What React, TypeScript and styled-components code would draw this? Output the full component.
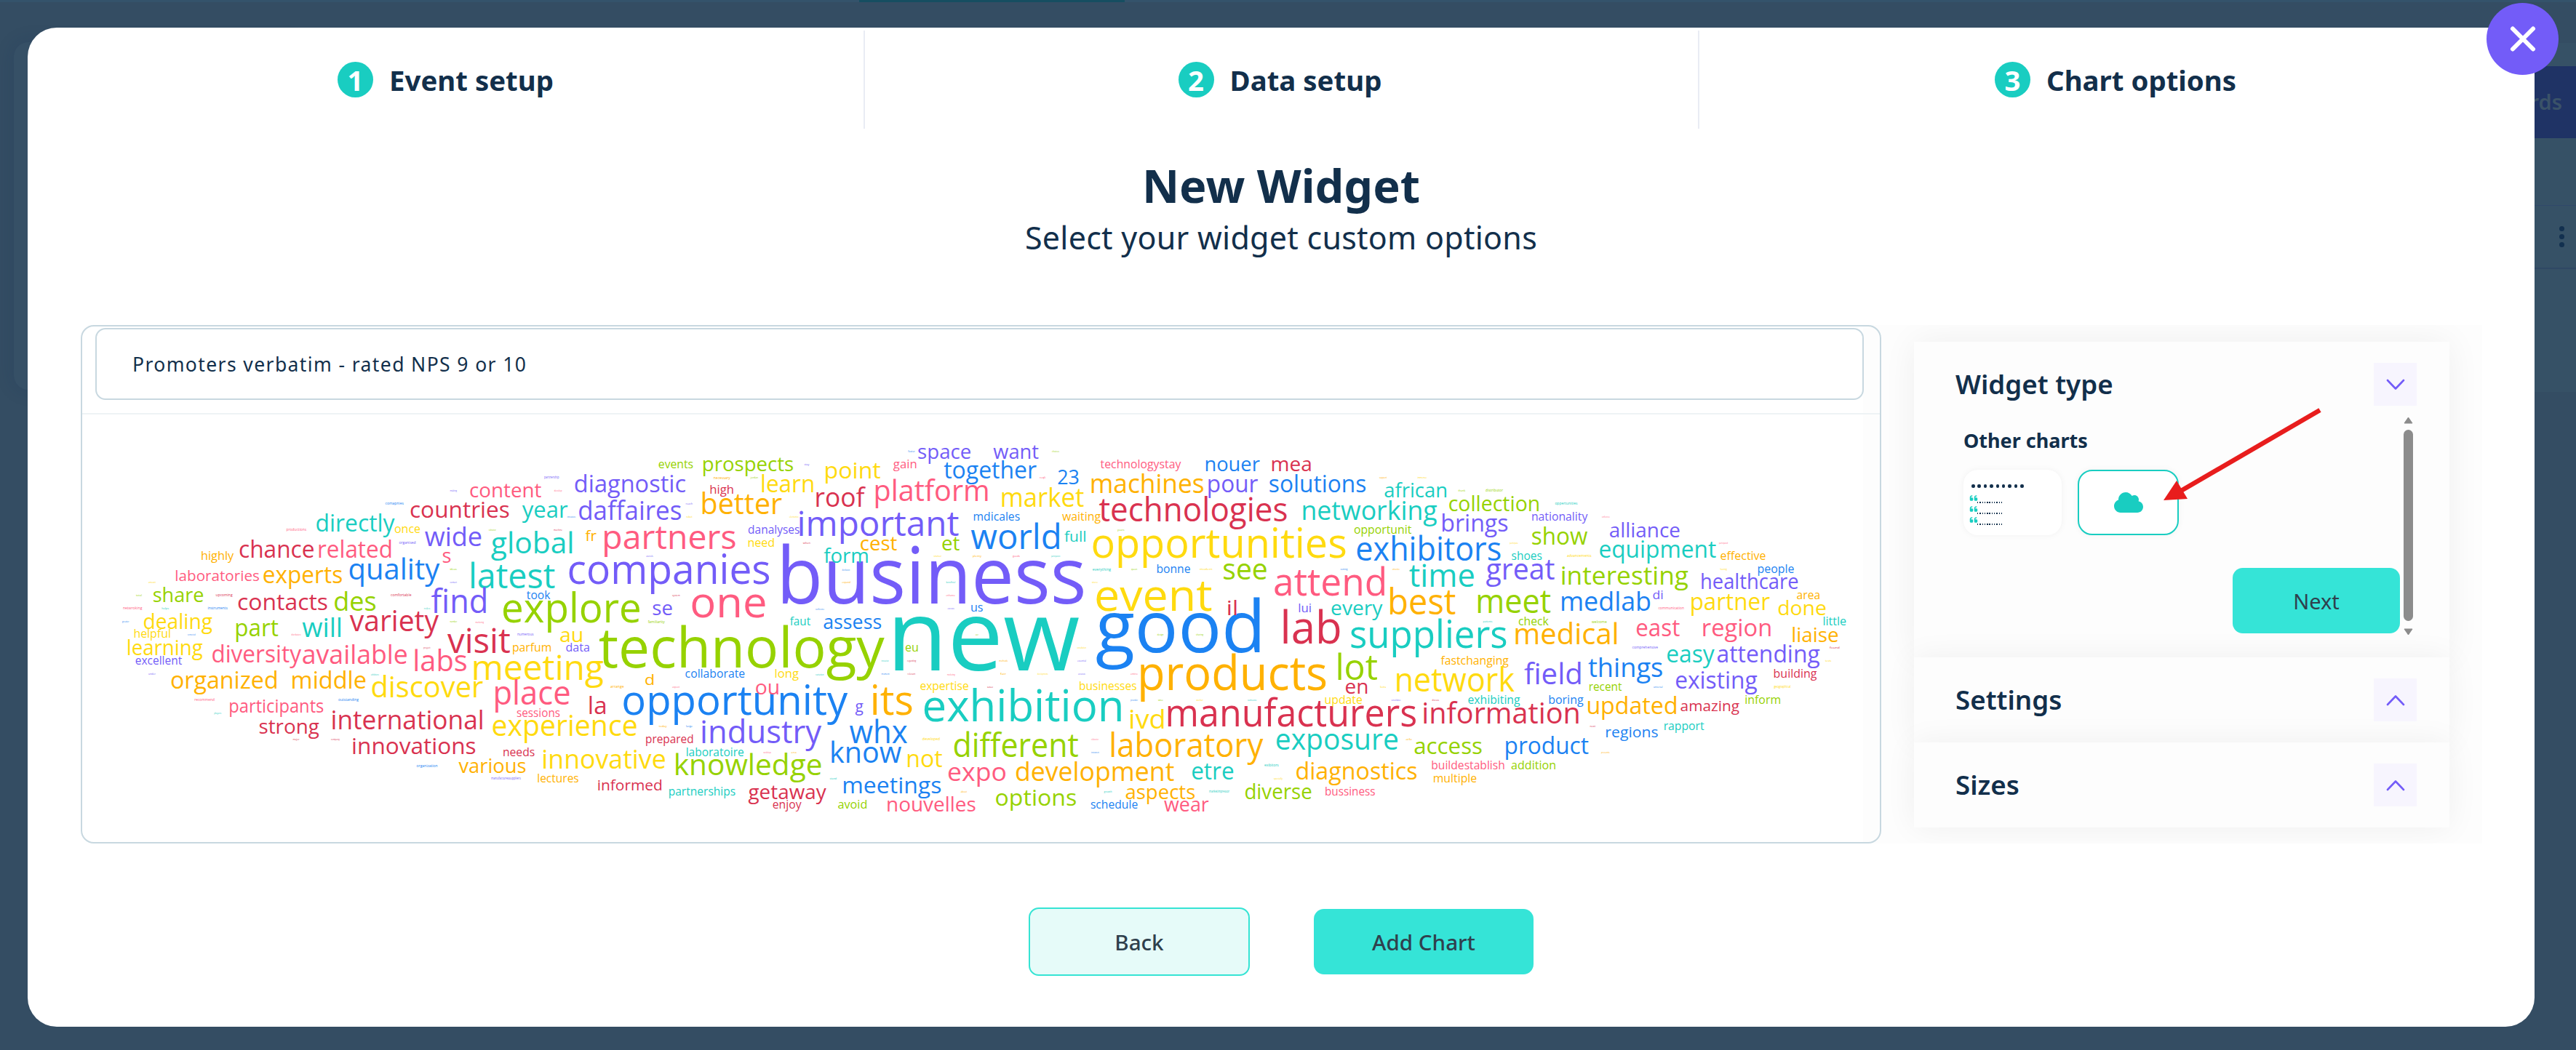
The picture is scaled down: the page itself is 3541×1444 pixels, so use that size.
import { FC, useState } from 'react';
import styled, { createGlobalStyle, css } from 'styled-components';
import { FaCloud, FaQuoteLeft } from 'react-icons/fa6';

const colors = {
    navy: '#122f4b',
    ink: '#2f404d',
    v: '#735cf8',
    t: '#19cdc1',
    g: '#96d200',
    y: '#ffda0f',
    o: '#ffb100',
    p: '#ff5b80',
    r: '#d93250',
    b: '#1b82f2',
};

type Tone = 'v' | 't' | 'g' | 'y' | 'o' | 'p' | 'r' | 'b';

// text, left, baseline, width, font size, colour
type Word = [string, number, number, number, number, Tone];

// text, left, middle, width, colour
type TinyWord = [string, number, number, number, Tone];

const words: Word[] = [
    ['content', 646.5, 683.7, 97.7, 27, 'p'],
    ['countries', 564.7, 711.9, 134.8, 31, 'r'],
    ['year', 718.3, 711.9, 62, 31, 't'],
    ['directly', 435.4, 730.5, 106.8, 33, 't'],
    ['once', 542.9, 732.9, 34.4, 17, 'y'],
    ['wide', 584.4, 750.1, 77.1, 37, 'v'],
    ['global', 675.6, 760.1, 110.7, 41, 't'],
    ['fr', 804.9, 743.9, 15, 20.5, 'o'],
    ['partners', 831, 754.3, 179.5, 46, 'p'],
    ['chance', 329.8, 766.3, 101.2, 33, 'r'],
    ['related', 438.5, 766, 98.9, 32, 'p'],
    ['highly', 277.2, 769.4, 43.9, 16.5, 'o'],
    ['s', 608.9, 773.9, 10.3, 27, 'p'],
    ['quality', 480.8, 796, 123, 41, 'b'],
    ['laboratories', 242, 798, 113.9, 20.5, 'p'],
    ['experts', 362.6, 801.8, 107.2, 32, 'o'],
    ['latest', 647.9, 808, 115, 48, 't'],
    ['companies', 782.7, 802.5, 274.4, 57, 'v'],
    ['share', 211.2, 827.6, 68, 28, 'g'],
    ['contacts', 327.8, 838, 121.8, 31, 'r'],
    ['des', 460.3, 839.7, 55.8, 36, 'g'],
    ['find', 593.5, 842.1, 74.3, 45, 'v'],
    ['took', 724.2, 823.2, 32, 16.5, 'b'],
    ['explore', 692.2, 855.9, 187, 56.5, 'g'],
    ['se', 897.8, 845.9, 26, 27, 'v'],
    ['one', 951.6, 848, 100.4, 59, 'p'],
    ['dealing', 198, 864.1, 93.7, 28.5, 'y'],
    ['part', 325, 874.5, 57.7, 33, 'g'],
    ['will', 416, 875.9, 52.2, 36, 't'],
    ['variety', 481.6, 867.9, 121, 40, 'r'],
    ['helpful', 184.7, 876.9, 49, 16.5, 'y'],
    ['learning', 176, 900, 102.4, 28.5, 'y'],
    ['diversity', 292.2, 910, 121.4, 33, 'p'],
    ['available', 416.8, 912.4, 142.3, 37, 'p'],
    ['excellent', 186.7, 913, 63.3, 16.5, 'v'],
    ['labs', 570.6, 922, 70.4, 41, 'p'],
    ['visit', 616, 897.9, 85.4, 48, 'r'],
    ['au', 770.5, 882, 29.7, 27, 'y'],
    ['parfum', 705.2, 895.5, 51.8, 16.5, 'o'],
    ['data', 778.4, 895.5, 31.2, 16.5, 'v'],
    ['meeting', 651.5, 934, 178, 47.5, 'y'],
    ['technology', 824.3, 917.2, 390.7, 77.5, 'g'],
    ['faut', 1086, 859.3, 28, 16.5, 't'],
    ['assess', 1132.7, 864, 78.3, 27, 'b'],
    ['organized', 235.7, 946, 144.3, 33, 'o'],
    ['middle', 402.2, 946, 100.4, 33, 'o'],
    ['discover', 511.7, 958, 152.2, 41, 'y'],
    ['place', 681, 968.5, 101.6, 45, 'p'],
    ['d', 887, 941.6, 11.5, 20, 'o'],
    ['collaborate', 942.5, 931, 81, 16.5, 'b'],
    ['long', 1065.8, 931, 32, 16.5, 'y'],
    ['opportunity', 857.5, 982, 307.2, 57, 'b'],
    ['ou', 1039.3, 954, 30.8, 27, 'p'],
    ['g', 1175.8, 978.5, 10.7, 21, 'v'],
    ['its', 1200.3, 982, 53, 56, 'o'],
    ['participants', 316.3, 979, 128, 25, 'p'],
    ['international', 457.5, 1002, 205.2, 36.5, 'r'],
    ['la', 810.4, 981.6, 21.7, 32, 'r'],
    ['sessions', 710.8, 985, 58.5, 16.5, 'p'],
    ['experience', 677.6, 1011.9, 197.3, 40, 'y'],
    ['strong', 357, 1008, 81.5, 28, 'r'],
    ['prepared', 888.3, 1021, 64, 16.5, 'r'],
    ['industry', 965.4, 1021.5, 163.3, 43, 'v'],
    ['whx', 1168.3, 1021.5, 79, 43, 'b'],
    ['innovations', 485.6, 1036, 167.6, 31.5, 'r'],
    ['needs', 692.2, 1039.4, 42.3, 16.5, 'r'],
    ['laboratoire', 944, 1039.4, 78, 16.5, 't'],
    ['innovative', 747.2, 1056.3, 166.9, 36, 'y'],
    ['knowledge', 929, 1065.6, 199.7, 40, 'g'],
    ['know', 1143.3, 1048, 95.7, 40, 'b'],
    ['various', 631, 1062, 91.3, 28, 'o'],
    ['lectures', 739.6, 1075, 55.4, 16.5, 'o'],
    ['informed', 822.3, 1086, 87, 20.5, 'r'],
    ['partnerships', 920, 1093.5, 90.5, 16.5, 't'],
    ['getaway', 1029, 1098, 106.4, 28, 'r'],
    ['enjoy', 1062.7, 1111.4, 38.7, 16.5, 'r'],
    ['avoid', 1152.4, 1111.4, 38.7, 16.5, 'g'],
    ['nouvelles', 1220.3, 1115.5, 120.2, 28, 'p'],
    ['meetings', 1159.8, 1090, 133.2, 31.5, 'b'],
    ['events', 905.7, 643, 46.7, 16.5, 'g'],
    ['prospects', 967, 647.9, 123, 28, 'g'],
    ['point', 1135, 657.8, 75.5, 31, 'y'],
    ['gain', 1228.2, 643, 31.2, 16.5, 'p'],
    ['diagnostic', 790.6, 676, 151, 33, 'v'],
    ['learn', 1047.6, 676, 70, 33, 'y'],
    ['high', 976.5, 678.9, 31.2, 16.5, 'r'],
    ['daffaires', 796.2, 714, 139.6, 36, 'v'],
    ['better', 965.8, 706, 109, 41, 'o'],
    ['roof', 1122.4, 696, 65.6, 37, 'r'],
    ['platform', 1203.7, 688, 153.8, 41, 'p'],
    ['danalyses', 1029, 733, 69.6, 16.5, 'v'],
    ['need', 1028.7, 751, 35.2, 16.5, 'y'],
    ['important', 1099.4, 736, 218.6, 48, 'v'],
    ['cest', 1183.3, 756, 49.8, 27, 'o'],
    ['business', 1076, 829, 412.6, 108, 'v'],
    ['form', 1132.7, 773.6, 60, 28, 't'],
    ['et', 1295.4, 756, 23.7, 27, 'g'],
    ['space', 1262.6, 630, 71.6, 27, 'v'],
    ['want', 1365.8, 630, 62, 27, 'v'],
    ['together', 1297.8, 657.8, 127, 32, 'b'],
    ['23', 1454.7, 665.8, 28, 27.5, 'b'],
    ['market', 1377.6, 696, 112.3, 37, 'y'],
    ['machines', 1500.6, 677.8, 153.4, 37, 'o'],
    ['pour', 1661.5, 676, 67.6, 33, 'v'],
    ['nouer', 1657.6, 647.5, 74, 27, 'b'],
    ['technologystay', 1512.9, 643, 110.3, 16.5, 'p'],
    ['mdicales', 1338.9, 715, 62.5, 16.5, 'b'],
    ['waiting', 1460.3, 715, 52.6, 16.5, 'o'],
    ['technologies', 1511.3, 716, 257.2, 45, 'r'],
    ['world', 1335.3, 754, 120.6, 48, 'b'],
    ['full', 1463.4, 744, 28.5, 20.5, 't'],
    ['opportunities', 1502.6, 766.3, 346.6, 57, 'y'],
    ['bonne', 1590.8, 787.3, 45, 16.5, 'b'],
    ['see', 1682.5, 796, 58.5, 40, 'g'],
    ['event', 1507.3, 839.7, 158.6, 61, 'y'],
    ['good', 1508, 896.5, 224, 98, 'b'],
    ['il', 1688, 845.9, 11.9, 28, 'r'],
    ['new', 1230, 921.3, 253, 136, 't'],
    ['us', 1335.3, 840.7, 15.4, 16.5, 'b'],
    ['eu', 1244.8, 895.5, 16.6, 16.5, 'g'],
    ['expertise', 1265.3, 948.9, 65.6, 16.5, 'y'],
    ['businesses', 1484.4, 948.9, 77.5, 16.5, 'y'],
    ['exhibition', 1270.9, 991.9, 269.7, 61, 't'],
    ['products', 1568.2, 948.2, 254, 66, 'o'],
    ['ivd', 1554, 1001.9, 45.9, 36, 'y'],
    ['manufacturers', 1605.8, 998, 340, 53, 'r'],
    ['different', 1312, 1040, 170.4, 45, 'g'],
    ['laboratory', 1527.9, 1040, 208, 45, 'o'],
    ['not', 1248, 1054, 47.4, 33, 'y'],
    ['expo', 1304, 1073.9, 78.3, 35, 'p'],
    ['development', 1397, 1073.9, 217, 36.5, 'o'],
    ['etre', 1639, 1071.8, 56.2, 33, 't'],
    ['options', 1369.3, 1107.6, 109.5, 31, 'g'],
    ['aspects', 1548, 1098, 94, 28, 'o'],
    ['schedule', 1499.8, 1111, 63.7, 16.5, 'b'],
    ['wear', 1600.6, 1115.5, 61, 27, 'p'],
    ['mea', 1748.7, 647.5, 53, 27, 'r'],
    ['solutions', 1745.6, 676, 131.3, 33, 'b'],
    ['african', 1903.7, 683.7, 84.2, 28, 't'],
    ['networking', 1791.4, 714, 183.9, 36.5, 't'],
    ['collection', 1992.3, 702, 122.6, 28.5, 'g'],
    ['nationality', 2106.2, 715, 76, 16.5, 'v'],
    ['opportunit', 1861.8, 733, 78.3, 16.5, 'g'],
    ['brings', 1982.8, 730, 89.4, 32, 'v'],
    ['show', 2106.6, 748, 75.5, 33, 'g'],
    ['exhibitors', 1865.8, 770, 196.5, 45, 'b'],
    ['shoes', 2078.5, 769, 40.7, 16.5, 't'],
    ['attend', 1753, 818, 150, 53, 'p'],
    ['time', 1937.7, 806, 88.2, 43, 't'],
    ['great', 2043.3, 796, 93.7, 40, 'v'],
    ['every', 1830.6, 845.9, 69.6, 27, 't'],
    ['lui', 1785.5, 841, 16.2, 16.5, 'v'],
    ['best', 1911.2, 844, 89.8, 48.5, 'o'],
    ['meet', 2031.8, 842, 100, 45, 'g'],
    ['lab', 1764.5, 884, 77.5, 62, 'r'],
    ['suppliers', 1857.9, 890, 212.3, 53, 't'],
    ['check', 2088, 859, 40.7, 16.5, 'g'],
    ['medical', 2083.6, 885.5, 138.8, 41, 'o'],
    ['lot', 1839.3, 934, 54.2, 49, 'g'],
    ['en', 1850, 953.7, 29.3, 27, 'r'],
    ['fastchanging', 1980.8, 913, 92.9, 16.5, 'o'],
    ['network', 1920.3, 950, 161.3, 45, 'y'],
    ['field', 2095.8, 940, 76.8, 41, 'v'],
    ['things', 2183.7, 930, 101, 36.5, 'b'],
    ['recent', 2185, 949, 44.4, 16.5, 'g'],
    ['update', 1821.9, 967.5, 50.2, 16.5, 'y'],
    ['exhibiting', 2018.4, 967.5, 71, 16.5, 't'],
    ['boring', 2129.5, 967.5, 47, 16.5, 'b'],
    ['information', 1957.5, 994, 212, 41, 'r'],
    ['exposure', 1755, 1030, 166, 40, 't'],
    ['access', 1944.9, 1036, 91.7, 31, 'g'],
    ['product', 2070.2, 1036, 113.5, 33, 'b'],
    ['regions', 2208, 1013.6, 70.6, 20.5, 'b'],
    ['rapport', 2288, 1003.6, 54.4, 16.5, 't'],
    ['buildestablish', 1968.6, 1057, 98.9, 16.5, 'p'],
    ['addition', 2078, 1057, 59.7, 16.5, 'g'],
    ['multiple', 1971, 1075, 58.5, 16.5, 'o'],
    ['diagnostics', 1782.3, 1071.8, 164.9, 32.5, 'o'],
    ['diverse', 1712, 1098, 90.5, 28.5, 'g'],
    ['bussiness', 1822.3, 1093.5, 67.6, 16.5, 'p'],
    ['alliance', 2213.3, 738, 95.4, 28, 'v'],
    ['equipment', 2199.2, 766, 159.8, 32, 't'],
    ['effective', 2365.5, 769, 61.3, 16.5, 'o'],
    ['people', 2416.8, 787, 48.9, 16.5, 'b'],
    ['interesting', 2147.5, 803.9, 173.2, 35.5, 'g'],
    ['healthcare', 2339.3, 809.7, 132, 28.5, 'v'],
    ['medlab', 2146.8, 839.7, 121.6, 36.5, 'b'],
    ['di', 2272.5, 823, 13, 16.5, 'v'],
    ['partner', 2325.2, 838, 107.5, 32, 'y'],
    ['area', 2470.5, 823, 30.3, 16.5, 'o'],
    ['done', 2444.7, 845.9, 65, 28, 'y'],
    ['little', 2506.7, 859, 30.7, 16.5, 't'],
    ['east', 2250, 874, 59, 32, 'p'],
    ['region', 2341.4, 874, 92.3, 32, 'p'],
    ['liaise', 2464.4, 882, 62, 28, 'o'],
    ['easy', 2292, 910, 64.4, 32, 't'],
    ['attending', 2361.4, 910, 140, 33, 'v'],
    ['building', 2438.9, 931, 58.5, 16.5, 'r'],
    ['existing', 2303.9, 946, 111.6, 32, 'v'],
    ['inform', 2399.6, 967.5, 47.2, 16.5, 'g'],
    ['updated', 2183, 981.6, 121, 32.5, 'o'],
    ['amazing', 2310.7, 977.8, 80.2, 20.5, 'r'],
];

const tinyWords: TinyWord[] = [
    ['partnership', 748, 656, 20.5, 'v'],
    ['making', 618.4, 674, 9.5, 'v'],
    ['comapnies', 529.5, 692, 25.3, 'b'],
    ['productions', 393.5, 728.4, 27.7, 'p'],
    ['organised', 548.4, 746.4, 23.3, 'v'],
    ['cultivation', 671.8, 728, 10, 'g'],
    ['ideas', 618.4, 782, 9.5, 'g'],
    ['contact', 618.4, 800, 9.5, 'v'],
    ['amount', 204, 800, 10, 'y'],
    ['total', 187, 817.6, 8, 'g'],
    ['upcoming', 296.6, 818.3, 23, 'r'],
    ['comfortable', 537, 818.3, 28.5, 'r'],
    ['netwroking', 168.9, 836, 26.5, 'p'],
    ['helps', 222.2, 836, 10, 't'],
    ['instruments', 285.5, 836, 27.3, 'b'],
    ['roles', 582.8, 836, 8.3, 't'],
    ['greater', 168, 854, 9.5, 'b'],
    ['number', 618.4, 854, 10, 'g'],
    ['marketing', 653.6, 854.5, 11.5, 'p'],
    ['numerous', 711, 872, 22.5, 'v'],
    ['connected', 257.8, 872, 10.7, 'b'],
    ['distributors', 400.6, 872, 13, 'p'],
    ['project', 582, 890, 9.5, 'r'],
    ['familiarity', 890.7, 854.5, 23, 'g'],
    ['under', 204, 926, 10, 'v'],
    ['exhibitions', 509.7, 926.5, 11, 't'],
    ['recommend', 267.3, 962, 27.7, 'p'],
    ['outstanding', 465, 962, 28, 'b'],
    ['players', 294.2, 980, 10, 't'],
    ['major', 402.5, 1016, 9, 'r'],
    ['company', 455, 1016, 12, 'r'],
    ['organization', 572.6, 1052.5, 29, 'b'],
    ['manufacturessuppliers', 675, 1069.7, 40.7, 'v'],
    ['develop', 761.8, 674, 10.7, 'p'],
    ['necessary', 980.8, 656.5, 23, 'o'],
    ['jordan', 1031.8, 656, 10.3, 'g'],
    ['stay', 1105.4, 638, 7, 'v'],
    ['faster', 1248.3, 619.6, 9.5, 'b'],
    ['reach', 942.5, 692, 9.5, 'v'],
    ['robot', 943.3, 710, 8.3, 'y'],
    ['innovators', 779.6, 710, 11.5, 'b'],
    ['electronics', 1085, 710, 12.6, 'y'],
    ['machine', 761, 728, 12, 'r'],
    ['when', 1103.8, 745.7, 10.3, 'r'],
    ['utensils', 888.3, 764, 9.5, 'v'],
    ['system', 924, 818, 10.7, 'r'],
    ['distribution', 1157.6, 782.5, 10.7, 'b'],
    ['expand', 1157.6, 800, 11.5, 'o'],
    ['conference', 1121, 836.6, 12, 'b'],
    ['arrange', 839, 944, 18.6, 'o'],
    ['expect', 924, 944, 10.3, 'p'],
    ['variation', 1121, 926.5, 11.5, 't'],
    ['today', 905.7, 998, 11, 'o'],
    ['large', 943, 998, 9, 'b'],
    ['workshops', 1049.6, 1034, 10.3, 'p'],
    ['era', 1087.6, 1034, 7.5, 'o'],
    ['stand', 1140.6, 1070, 9.5, 't'],
    ['choices', 1446, 620, 10, 'g'],
    ['reqli', 1429, 656, 8.3, 'p'],
    ['visitor', 1283.5, 764, 10.7, 'y'],
    ['plenty', 1337, 764, 12, 'o'],
    ['goods', 1392, 764, 10, 'p'],
    ['participation', 1444.9, 764, 12.3, 't'],
    ['years', 1536, 728, 9.5, 'g'],
    ['everything', 1501.8, 782.5, 25.3, 't'],
    ['queen', 1555, 782, 8.3, 'g'],
    ['modern', 1649, 782, 17.8, 'y'],
    ['store', 1501, 800, 8, 'y'],
    ['beneficial', 1300.5, 800, 12.6, 't'],
    ['enhance', 1300.5, 818, 12.6, 'p'],
    ['execute', 1302.5, 836, 9.5, 'v'],
    ['user', 1341, 871.5, 4, 'g'],
    ['design', 1590.8, 872, 8.7, 'g'],
    ['sharing', 1644, 872, 10, 'g'],
    ['consultation', 1480.4, 890, 12.7, 'y'],
    ['innovation', 1211.6, 908, 10, 't'],
    ['regarding', 1247, 908, 12.3, 'r'],
    ['methods', 1373.3, 908, 11.9, 'o'],
    ['essential', 1481, 908, 12, 'v'],
    ['moment', 1211.6, 926, 11, 'b'],
    ['relevant', 1247.5, 926, 10.7, 'r'],
    ['marketing', 1302, 926.5, 10.7, 'p'],
    ['fair', 1375, 926, 8, 'o'],
    ['developments', 1426, 926, 14.6, 'y'],
    ['accurate', 1482, 926, 10, 'v'],
    ['entire', 1554, 926, 10, 'p'],
    ['use', 1357, 944, 8.3, 'r'],
    ['provider', 1554, 962, 10, 'b'],
    ['wise', 1592, 962, 6.7, 'g'],
    ['worker', 1644.5, 962, 9.5, 'y'],
    ['someone', 1715, 962, 12.3, 't'],
    ['developed', 1267.7, 1016, 24.5, 'y'],
    ['collaboration', 1500, 1016, 10, 'p'],
    ['instrument', 1500, 1034, 10.7, 'b'],
    ['about', 1320.7, 1087.6, 8.3, 'o'],
    ['growth', 1517.6, 1088, 11, 't'],
    ['marketimpressor', 1662, 1087.6, 28, 't'],
    ['exibitors', 1738, 1052, 19.7, 't'],
    ['specially', 1751, 1070, 12, 'y'],
    ['support', 1896, 656, 10.3, 'o'],
    ['immense', 1948.4, 656, 12.7, 'y'],
    ['thank', 2004.6, 674, 9.5, 'g'],
    ['distributor', 2042, 674, 24, 'g'],
    ['oppertunities', 2137.4, 692, 31, 't'],
    ['conferences', 2201.9, 710, 10.7, 'p'],
    ['participate', 2075.3, 746, 11.5, 'y'],
    ['advancements', 2154, 764, 33.6, 'y'],
    ['participated', 2363, 746, 12, 'p'],
    ['coming', 1842.4, 782, 9.9, 'b'],
    ['attractive', 1914, 782, 9.9, 'o'],
    ['having', 2364.8, 782, 9, 'y'],
    ['communication', 2279.4, 836, 35.5, 'p'],
    ['patients', 2038.6, 854, 12.7, 't'],
    ['welcome', 2188, 854.5, 20.7, 'g'],
    ['comprehensive', 2243.6, 890, 35.5, 'v'],
    ['found', 2515, 890, 13.8, 'r'],
    ['tests', 2509, 907.6, 8.3, 'y'],
    ['geographical', 2438.5, 944, 23, 'y'],
    ['universal', 2273, 944, 12.4, 'b'],
    ['next', 2185.4, 998, 7.6, 'r'],
    ['presents', 2201, 1034, 11.7, 'o'],
    ['lots', 1897, 944, 8.3, 'y'],
    ['consolidates', 1912.4, 962, 13, 'v'],
    ['discuss', 1968.6, 962, 9.5, 'r'],
    ['aile', 1932.6, 1016, 8.7, 'o'],
];

const GlobalStyle = createGlobalStyle`
    * {
        box-sizing: border-box;
    }
    body {
        margin: 0;
        background: #344d63;
        color: ${colors.navy};
        font-family: 'Noto Sans', 'Open Sans', sans-serif;
    }
`;

const Page = styled.div`
    position: relative;
    width: 3541px;
    height: 1444px;
    padding: 38px 57px 32px 38px;
    overflow: hidden;
    background: #344d63;
`;

/* Dashboard that stays visible around the dialog */
const TopStrip = styled.div`
    position: absolute;
    top: 0;
    left: 0;
    right: 0;
    height: 3px;
    padding-left: 1181px;
    background: #34536b;
    &::before {
        content: '';
        display: block;
        width: 365px;
        height: 3px;
        background: #164e61;
    }
`;

const BackCard = styled.div`
    position: absolute;
    top: 58px;
    left: 19px;
    width: 400px;
    height: 478px;
    border-radius: 20px;
    background: #365066;
    box-shadow: 0 0 24px rgba(20, 50, 90, 0.2);
`;

const BackColumn = styled.div`
    position: absolute;
    top: 59px;
    right: 0;
    width: 120px;
    height: 480px;
    padding-top: 32px;
    background: #365166;
`;

const BackButton = styled.div`
    height: 99px;
    padding: 29px 19px 0 0;
    background: #1f3365;
    color: #3a5268;
    font-size: 29px;
    line-height: 40px;
    font-weight: 600;
    text-align: right;
`;

const BackMenu = styled.div`
    display: flex;
    flex-direction: column;
    align-items: flex-end;
    gap: 4px;
    height: 88px;
    margin-top: 92px;
    padding: 28px 16px 0 0;
    border-top: 1px solid #30496a;
    border-bottom: 2px solid #2f4864;
    i {
        width: 7px;
        height: 7px;
        border-radius: 50%;
        background: #12304f;
    }
`;

const Modal = styled.div`
    position: relative;
    width: 3446px;
    height: 1374px;
    border-radius: 40px;
    background: #fff;
`;

const CloseButton = styled.button`
    position: absolute;
    top: -34px;
    right: -33px;
    z-index: 2;
    display: flex;
    align-items: center;
    justify-content: center;
    width: 99px;
    height: 99px;
    border: 0;
    border-radius: 50%;
    background: ${colors.v};
`;

const Steps = styled.div`
    display: grid;
    grid-template-columns: 1149px 1147px 1fr;
    padding-top: 4px;
`;

const Step = styled.div`
    display: flex;
    align-items: center;
    justify-content: center;
    gap: 22px;
    height: 135px;
    font-size: 38.4px;
    font-weight: 700;
    & + & {
        padding-right: 4px;
        border-left: 2px solid #e9ecf4;
    }
`;

const StepNumber = styled.span`
    display: flex;
    align-items: center;
    justify-content: center;
    width: 49px;
    height: 49px;
    border-radius: 50%;
    background: ${colors.t};
    color: #fff;
    font-weight: 700;
`;

const Heading = styled.div`
    margin-top: 34px;
    text-align: center;
`;

const Title = styled.h1`
    margin: 0;
    font-size: 63px;
    line-height: 87px;
    font-weight: 700;
`;

const Subtitle = styled.p`
    margin: 0;
    font-size: 43px;
    line-height: 57px;
    letter-spacing: 0.25px;
`;

const Workspace = styled.div`
    display: flex;
    height: 713px;
    margin-top: 92px;
    padding-left: 73px;
`;

const ChartPanel = styled.div`
    position: relative;
    z-index: 1;
    width: 2475px;
    height: 713px;
    border: 2px solid #c8d8e0;
    border-radius: 18px;
`;

const ChartHeader = styled.div`
    height: 121px;
    padding: 2px 22px 0 18px;
    border-bottom: 2px solid #eef3f5;
`;

const TitleInput = styled.input`
    width: 100%;
    height: 99px;
    padding: 0 49px;
    border: 2px solid #c8d8e0;
    border-radius: 14px;
    background: #fff;
    color: ${colors.navy};
    font-family: inherit;
    font-size: 26.5px;
    font-weight: 450;
    letter-spacing: 1.4px;
    outline: none;
`;

const CloudCanvas = styled.svg`
    display: block;
    width: 2471px;
    height: 588px;
    font-family: 'Open Sans', 'Noto Sans', sans-serif;
`;

const SidePanel = styled.div`
    width: 851px;
    height: 713px;
    margin-left: -25px;
    padding: 23px 45px 0 70px;
    overflow: hidden;
    background: #fdfdfd;
`;

const Section = styled.div<{ $open?: boolean }>`
    height: ${({ $open }) => ($open ? 434 : 117)}px;
    padding: 29px 45px 0 57px;
    background: #fdfdfd;
    box-shadow: 0 0 44px rgba(0, 0, 0, 0.06);
`;

const SectionHeader = styled.div`
    display: flex;
    align-items: center;
    justify-content: space-between;
    height: 59px;
    font-size: 36.7px;
    line-height: 48px;
    font-weight: 600;
`;

const SectionTitle = styled.span`
    padding-bottom: 2px;
`;

const Toggle = styled.button`
    display: flex;
    align-items: center;
    justify-content: center;
    width: 59px;
    height: 59px;
    padding: 0;
    border: 0;
    background: #f7f5fe;
`;

const Chevron = styled.svg<{ $down?: boolean }>`
    width: 26px;
    height: 16px;
    ${({ $down }) =>
        $down &&
        css`
            transform: rotate(180deg);
        `}
`;

const SectionBody = styled.div`
    display: flex;
    justify-content: space-between;
    margin-top: 8px;
`;

const BodyContent = styled.div`
    display: flex;
    flex-direction: column;
    width: 611px;
    padding: 20px 0 0 11px;
`;

const GroupTitle = styled.div`
    height: 60px;
    font-size: 27px;
    line-height: 40px;
    font-weight: 700;
`;

const Tiles = styled.div`
    display: flex;
    gap: 22px;
`;

const Tile = styled.div<{ $selected?: boolean }>`
    width: ${({ $selected }) => ($selected ? 139 : 135)}px;
    height: 90px;
    padding: 20px 8px 0;
    border-radius: 20px;
    background: #fff;
    box-shadow: 0 0 10px rgba(0, 0, 0, 0.05);
    ${({ $selected }) =>
        $selected &&
        css`
            display: flex;
            align-items: center;
            justify-content: center;
            padding: 0;
            border: 2px solid ${colors.t};
            color: ${colors.t};
            font-size: 40px;
        `}
`;

const DotRow = styled.div`
    display: flex;
    gap: 3.9px;
    height: 5px;
    margin: 0 0 8px 3px;
    i {
        width: 4.5px;
        height: 4.5px;
        border-radius: 50%;
        background: ${colors.navy};
    }
`;

const QuoteRow = styled.div`
    display: flex;
    align-items: flex-start;
    height: 15px;
    color: ${colors.t};
    font-size: 12px;
    line-height: 0;
    &::after {
        content: '';
        width: 35px;
        height: 1.4px;
        margin: 11.4px 0 0 -1px;
        background: repeating-linear-gradient(
            90deg,
            ${colors.navy} 0 1.4px,
            transparent 1.4px 3.3px
        );
    }
`;

const ScrollBar = styled.div`
    display: flex;
    flex-direction: column;
    align-items: center;
    width: 13px;
    margin: 7px 5px 0 0;
`;

const ScrollThumb = styled.div`
    width: 13px;
    height: 263px;
    margin: 8px 0 10px;
    border-radius: 7px;
    background: #8c8c8c;
`;

const Button = styled.button<{ $outline?: boolean }>`
    width: 302px;
    height: 90px;
    border: 0;
    border-radius: 14px;
    background: #35e4d7;
    color: ${colors.ink};
    font-family: inherit;
    font-size: 29.6px;
    font-weight: 500;
    ${({ $outline }) =>
        $outline &&
        css`
            width: 304px;
            height: 94px;
            border: 2px solid #35e4d4;
            background: #e6fbf9;
        `}
`;

const NextButton = styled(Button)`
    width: 230px;
    margin-top: 45px;
    align-self: flex-end;
    font-size: 29px;
    font-weight: 400;
`;

const Footer = styled.div`
    display: flex;
    align-items: center;
    justify-content: center;
    gap: 88px;
    margin-top: 88px;
`;

const Pointer = styled.svg`
    position: absolute;
    left: 2930px;
    top: 516px;
    z-index: 3;
    width: 230px;
    height: 146px;
`;

// Space beside the outer glyphs of a word, in em
const leftBearing = (text: string) => {
    if (/^[bhiklmnpru]/.test(text)) return 0.08;
    if (/^[tfvwxyg]/.test(text)) return 0.02;
    return 0.055;
};

const rightBearing = (text: string) => {
    if (/[adhilmnqu]$/.test(text)) return 0.08;
    if (/[rtfvwxyzkg]$/.test(text)) return 0.01;
    return 0.045;
};

const WordCloud: FC = () => (
    <CloudCanvas viewBox="113 569.5 2471 588">
        {words.map(([text, x, y, width, size, tone]) => (
            <text
                key={text}
                x={x - size * leftBearing(text)}
                y={y}
                fontSize={size}
                fill={colors[tone]}
                textLength={
                    width + size * (leftBearing(text) + rightBearing(text))
                }
                lengthAdjust="spacingAndGlyphs"
            >
                {text}
            </text>
        ))}
        {tinyWords.map(([text, x, y, width, tone]) => (
            <text
                key={`${text}-${x}`}
                x={x}
                y={y + 1.5}
                fontSize={width > 18 ? 6 : 4}
                fill={colors[tone]}
                textLength={width}
                lengthAdjust="spacingAndGlyphs"
            >
                {text}
            </text>
        ))}
    </CloudCanvas>
);

const SectionToggle: FC<{ title: string; open?: boolean }> = ({
    title,
    open,
}) => (
    <SectionHeader>
        <SectionTitle>{title}</SectionTitle>
        <Toggle>
            <Chevron $down={open} viewBox="0 0 26 16">
                <path
                    d="M2 14 13 2.5 24 14"
                    fill="none"
                    stroke={colors.v}
                    strokeWidth="2.6"
                    strokeLinecap="round"
                    strokeLinejoin="round"
                />
            </Chevron>
        </Toggle>
    </SectionHeader>
);

export default function App() {
    const [title, setTitle] = useState('Promoters verbatim - rated NPS 9 or 10');

    return (
        <Page>
            <GlobalStyle />
            <TopStrip />
            <BackCard />
            <BackColumn>
                <BackButton>rds</BackButton>
                <BackMenu>
                    <i />
                    <i />
                    <i />
                </BackMenu>
            </BackColumn>
            <Modal>
                <CloseButton>
                    <svg width="40" height="40" viewBox="0 0 40 40">
                        <path
                            d="M6 5.5 34 33.5M34 5.5 6 33.5"
                            stroke="#fff"
                            strokeWidth="6"
                            strokeLinecap="round"
                        />
                    </svg>
                </CloseButton>
                <Steps>
                    {['Event setup', 'Data setup', 'Chart options'].map(
                        (label, index) => (
                            <Step key={label}>
                                <StepNumber>{index + 1}</StepNumber>
                                {label}
                            </Step>
                        )
                    )}
                </Steps>
                <Heading>
                    <Title>New Widget</Title>
                    <Subtitle>Select your widget custom options</Subtitle>
                </Heading>
                <Workspace>
                    <ChartPanel>
                        <ChartHeader>
                            <TitleInput
                                value={title}
                                onChange={(e) => setTitle(e.target.value)}
                            />
                        </ChartHeader>
                        <WordCloud />
                    </ChartPanel>
                    <SidePanel>
                        <Section $open>
                            <SectionToggle title="Widget type" open />
                            <SectionBody>
                                <BodyContent>
                                    <GroupTitle>Other charts</GroupTitle>
                                    <Tiles>
                                        <Tile>
                                            <DotRow>
                                                {Array.from({ length: 9 }).map(
                                                    (_, i) => (
                                                        <i key={i} />
                                                    )
                                                )}
                                            </DotRow>
                                            {[0, 1, 2].map((i) => (
                                                <QuoteRow key={i}>
                                                    <FaQuoteLeft />
                                                </QuoteRow>
                                            ))}
                                        </Tile>
                                        <Tile $selected>
                                            <FaCloud />
                                        </Tile>
                                    </Tiles>
                                    <NextButton>Next</NextButton>
                                </BodyContent>
                                <ScrollBar>
                                    <svg width="13" height="10">
                                        <path
                                            d="M6.5 1 12 9H1Z"
                                            fill="#8c8c8c"
                                            stroke="#8c8c8c"
                                            strokeLinejoin="round"
                                        />
                                    </svg>
                                    <ScrollThumb />
                                    <svg width="13" height="10">
                                        <path
                                            d="M6.5 9 12 1H1Z"
                                            fill="#8c8c8c"
                                            stroke="#8c8c8c"
                                            strokeLinejoin="round"
                                        />
                                    </svg>
                                </ScrollBar>
                            </SectionBody>
                        </Section>
                        <Section>
                            <SectionToggle title="Settings" />
                        </Section>
                        <Section>
                            <SectionToggle title="Sizes" />
                        </Section>
                    </SidePanel>
                </Workspace>
                <Footer>
                    <Button $outline>Back</Button>
                    <Button>Add Chart</Button>
                </Footer>
                <Pointer viewBox="0 0 230 146">
                    <path d="M221 10 30 121" stroke="#e81d1d" strokeWidth="6.5" />
                    <path d="M6 134 24 107 39 132Z" fill="#e81d1d" />
                </Pointer>
            </Modal>
        </Page>
    );
}
